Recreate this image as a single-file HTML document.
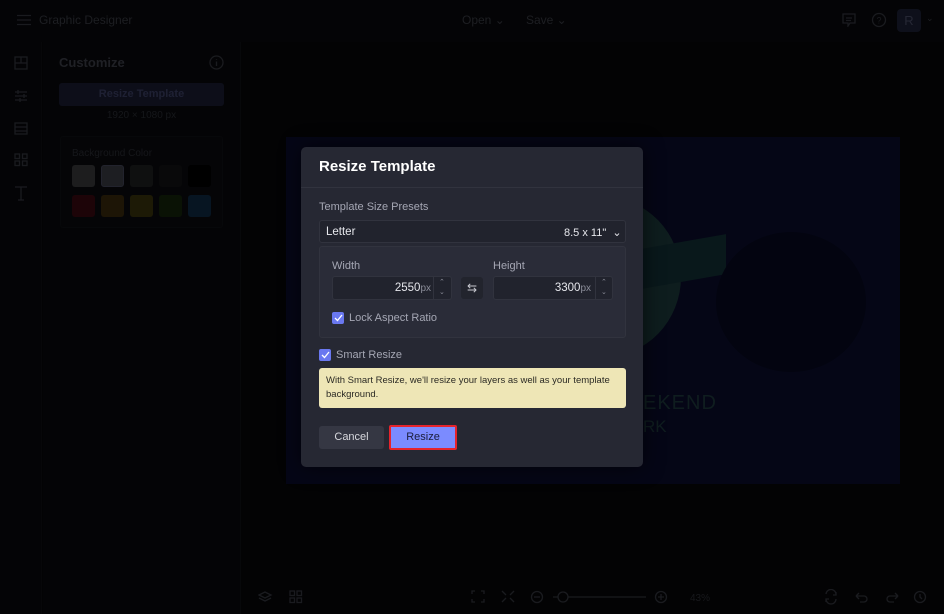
<!DOCTYPE html>
<html><head><meta charset="utf-8"><style>
*{box-sizing:border-box;margin:0;padding:0}
body{width:944px;height:614px;overflow:hidden;background:#060709;font-family:"Liberation Sans",sans-serif;position:relative}
.abs{position:absolute}
.t{color:#3b3d45;font-size:12px}
.ic{stroke:#35373f;fill:none;stroke-width:1.3}
.modal{left:301px;top:147px;width:342px;height:320px;background:#262833;border-radius:5px;box-shadow:0 0 20px rgba(0,0,0,.6)}
.lbl{color:#a5a7b4;font-size:11px}
.inp{background:#21232d;border:1px solid #31333e;border-radius:3px}
.cb{width:12px;height:12px;background:#6a78f0;border-radius:2px;display:flex;align-items:center;justify-content:center}
</style></head><body>
<div class="abs" style="left:0;top:0;width:944px;height:42px;background:#08090c"></div>
<svg class="abs" style="left:17px;top:14px" width="14" height="12"><path class="ic" d="M0 1.5H14M0 6H14M0 10.5H14" stroke="#3a3c44"/></svg>
<div class="abs t" style="left:39px;top:13px;color:#3a3c44">Graphic Designer</div>
<div class="abs t" style="left:462px;top:13px">Open ⌄</div>
<div class="abs t" style="left:526px;top:13px">Save ⌄</div>
<svg class="abs" style="left:842px;top:13px" width="14" height="14"><path class="ic" d="M1 1H13V10H8L6 13V10H1Z M4 5H10M4 7.5H9"/></svg>
<svg class="abs" style="left:871px;top:12px" width="16" height="16"><circle class="ic" cx="8" cy="8" r="6.5"/><text x="8" y="11.5" font-size="9" fill="#35373f" text-anchor="middle" font-family="Liberation Sans">?</text></svg>
<div class="abs" style="left:897px;top:9px;width:24px;height:23px;background:#1c2036;border-radius:4px;color:#4a4e68;font-size:13px;text-align:center;line-height:23px">R</div>
<div class="abs t" style="left:926px;top:13px;font-size:9px">⌄</div>
<div class="abs" style="left:0;top:42px;width:42px;height:572px;background:#08090c;border-right:1px solid #0e0f13"></div>
<svg class="abs" style="left:14px;top:56px" width="14" height="160">
<rect class="ic" x="1" y="1" width="12" height="12"/><path class="ic" d="M1 7H13M7 1V7"/>
<path class="ic" d="M1 36H13M1 40H13M1 44H13M4 34V38M10 38V42M6 42V46" stroke="#4a4c55"/>
<rect class="ic" x="1" y="67" width="12" height="11"/><path class="ic" d="M1 71H13M1 75H13"/>
<rect class="ic" x="1" y="98" width="4.5" height="4.5"/><rect class="ic" x="8.5" y="98" width="4.5" height="4.5"/><rect class="ic" x="1" y="105" width="4.5" height="4.5"/><rect class="ic" x="8.5" y="105" width="4.5" height="4.5"/>
<path class="ic" d="M1 131H13M7 131V144M4 144H10"/></svg>
<div class="abs" style="left:43px;top:42px;width:198px;height:572px;background:#08090c;border-right:1px solid #0f1014"></div>
<div class="abs" style="left:59px;top:55px;color:#3f414a;font-size:13px;font-weight:bold">Customize</div>
<svg class="abs" style="left:209px;top:55px" width="15" height="15"><circle class="ic" cx="7.5" cy="7.5" r="6.5" stroke="#3f414a"/><path class="ic" d="M7.5 6.5V11M7.5 4V4.8" stroke="#3f414a"/></svg>
<div class="abs" style="left:59px;top:83px;width:165px;height:23px;background:#1a1d33;border-radius:3px;color:#3c4066;font-size:11px;font-weight:bold;text-align:center;line-height:23px">Resize Template</div>
<div class="abs t" style="left:59px;top:110px;width:165px;text-align:center;font-size:10px;color:#2b2d34">1920 × 1080 px</div>
<div class="abs" style="left:60px;top:136px;width:163px;height:92px;background:#0a0b0e;border:1px solid #0f1014;border-radius:3px"></div>
<div class="abs t" style="left:72px;top:148px;font-size:10px;color:#2b2d34">Background Color</div>
<div class="abs" style="left:72px;top:165px;width:23px;height:22px;background:#3a3a3c;border-radius:3px"></div>
<div class="abs" style="left:101px;top:165px;width:23px;height:22px;background:#3b3c44;border-radius:3px;border:1px solid #45465a"></div>
<div class="abs" style="left:130px;top:165px;width:23px;height:22px;background:#1f2021;border-radius:3px"></div>
<div class="abs" style="left:159px;top:165px;width:23px;height:22px;background:#121314;border-radius:3px"></div>
<div class="abs" style="left:188px;top:165px;width:23px;height:22px;background:#000;border-radius:3px"></div>
<div class="abs" style="left:72px;top:195px;width:23px;height:22px;background:#3a0810;border-radius:3px"></div>
<div class="abs" style="left:101px;top:195px;width:23px;height:22px;background:#3a2a0c;border-radius:3px"></div>
<div class="abs" style="left:130px;top:195px;width:23px;height:22px;background:#3a340c;border-radius:3px"></div>
<div class="abs" style="left:159px;top:195px;width:23px;height:22px;background:#15250a;border-radius:3px"></div>
<div class="abs" style="left:188px;top:195px;width:23px;height:22px;background:#0f2a44;border-radius:3px"></div>
<div class="abs" style="left:286px;top:137px;width:614px;height:347px;background:#0a0d2c;overflow:hidden">
 <div class="abs" style="left:240px;top:60px;width:155px;height:160px;border-radius:50%;background:#1d3a3c"></div>
 <div class="abs" style="left:255px;top:70px;width:80px;height:70px;border-radius:50%;background:#05061a"></div>
 <div class="abs" style="left:350px;top:105px;width:90px;height:40px;background:#123036;transform:skewY(-10deg)"></div>
 <div class="abs" style="left:430px;top:95px;width:150px;height:140px;border-radius:50%;background:#070920"></div>
 <div class="abs" style="left:357px;top:255px;color:#1f3a3e;font-size:20px;letter-spacing:1px">EKEND</div>
 <div class="abs" style="left:357px;top:280px;color:#1f3a3e;font-size:17px">RK</div>
</div>
<svg class="abs" style="left:258px;top:589px" width="680" height="16">
<path class="ic" d="M1 6L7 3L13 6L7 9Z M1 9L7 12L13 9"/>
<rect class="ic" x="32" y="2" width="4.5" height="4.5"/><rect class="ic" x="39" y="2" width="4.5" height="4.5"/><rect class="ic" x="32" y="9" width="4.5" height="4.5"/><rect class="ic" x="39" y="9" width="4.5" height="4.5"/>
<path class="ic" d="M214 5V2H217M223 2H226V5M226 10V13H223M217 13H214V10"/>
<path class="ic" d="M244 2L248 6M256 2L252 6M244 13L248 9M256 13L252 9"/>
<circle class="ic" cx="279" cy="8" r="5.5"/><path class="ic" d="M276 8H282"/>
<path class="ic" d="M295 8H300M310 8H388"/><circle class="ic" cx="305" cy="8" r="5"/>
<circle class="ic" cx="403" cy="8" r="5.5"/><path class="ic" d="M400 8H406M403 5V11"/>
<text x="432" y="12" font-size="10" fill="#2e3037" font-family="Liberation Sans">43%</text>
<path class="ic" d="M568 5A5 5 0 0 1 578 6M578 10A5 5 0 0 1 568 10M578 3V6H575M568 13V10H571"/>
<path class="ic" d="M598 7H606A3 3 0 0 1 606 13H602M598 7L601 4M598 7L601 10" stroke="#1f2126"/>
<path class="ic" d="M640 7H632A3 3 0 0 0 632 13H636M640 7L637 4M640 7L637 10" stroke="#1f2126"/>
<circle class="ic" cx="662" cy="8" r="5.5"/><path class="ic" d="M662 5V8L664 10"/>
</svg>
<div class="abs" style="left:0;top:0;width:944px;height:614px;background:rgba(0,0,0,.5)"></div>
<div class="abs modal">
 <div class="abs" style="left:18px;top:11px;color:#fff;font-size:15px;font-weight:bold">Resize Template</div>
 <div class="abs" style="left:0;top:40px;width:342px;height:1px;background:#31333e"></div>
 <div class="abs lbl" style="left:18px;top:54px">Template Size Presets</div>
 <div class="abs inp" style="left:18px;top:73px;width:307px;height:23px"></div>
 <div class="abs" style="left:25px;top:79px;color:#e6e7ec;font-size:11.5px">Letter</div>
 <div class="abs" style="left:263px;top:79px;color:#e6e7ec;font-size:11px">8.5 x 11" &nbsp;⌄</div>
 <div class="abs" style="left:18px;top:99px;width:307px;height:92px;background:#2a2c38;border:1px solid #31333e;border-radius:3px"></div>
 <div class="abs lbl" style="left:31px;top:113px">Width</div>
 <div class="abs lbl" style="left:192px;top:113px">Height</div>
 <div class="abs inp" style="left:31px;top:129px;width:120px;height:24px"></div>
 <div class="abs" style="left:132px;top:129px;width:1px;height:24px;background:#31333e"></div>
 <div class="abs" style="left:60px;top:135px;width:70px;text-align:right;color:#e6e7ec;font-size:11.5px">2550<span style="color:#8b8d99;font-size:10px">px</span></div>
 <div class="abs" style="left:138px;top:131px;color:#8b8d99;font-size:7px;line-height:10px">⌃<br>⌄</div>
 <div class="abs" style="left:160px;top:130px;width:22px;height:22px;background:#22242d;border-radius:3px;color:#c8c9d0;font-size:12px;text-align:center;line-height:22px">⇆</div>
 <div class="abs inp" style="left:192px;top:129px;width:120px;height:24px"></div>
 <div class="abs" style="left:294px;top:129px;width:1px;height:24px;background:#31333e"></div>
 <div class="abs" style="left:220px;top:135px;width:70px;text-align:right;color:#e6e7ec;font-size:11.5px">3300<span style="color:#8b8d99;font-size:10px">px</span></div>
 <div class="abs" style="left:300px;top:131px;color:#8b8d99;font-size:7px;line-height:10px">⌃<br>⌄</div>
 <div class="abs cb" style="left:31px;top:165px"><svg width="9" height="8"><path d="M1 4L3.5 6.5L8 1" stroke="#fff" stroke-width="1.3" fill="none"/></svg></div>
 <div class="abs lbl" style="left:48px;top:165px">Lock Aspect Ratio</div>
 <div class="abs cb" style="left:18px;top:202px"><svg width="9" height="8"><path d="M1 4L3.5 6.5L8 1" stroke="#fff" stroke-width="1.3" fill="none"/></svg></div>
 <div class="abs lbl" style="left:35px;top:202px">Smart Resize</div>
 <div class="abs" style="left:18px;top:221px;width:307px;height:40px;background:#eee6b6;border-radius:3px;padding:6px 5px 6px 7px;color:#2b2a24;font-size:9.5px;line-height:13.5px">With Smart Resize, we'll resize your layers as well as your template background.</div>
 <div class="abs" style="left:18px;top:279px;width:65px;height:23px;background:#353743;border-radius:3px;color:#d8d9de;font-size:11px;text-align:center;line-height:23px">Cancel</div>
 <div class="abs" style="left:88px;top:278px;width:68px;height:25px;background:#e5232c;border-radius:2px"></div>
 <div class="abs" style="left:90px;top:280px;width:64px;height:21px;background:#7b8bff;color:#1a1d3a;font-size:11px;text-align:center;line-height:21px">Resize</div>
</div>
</body></html>
